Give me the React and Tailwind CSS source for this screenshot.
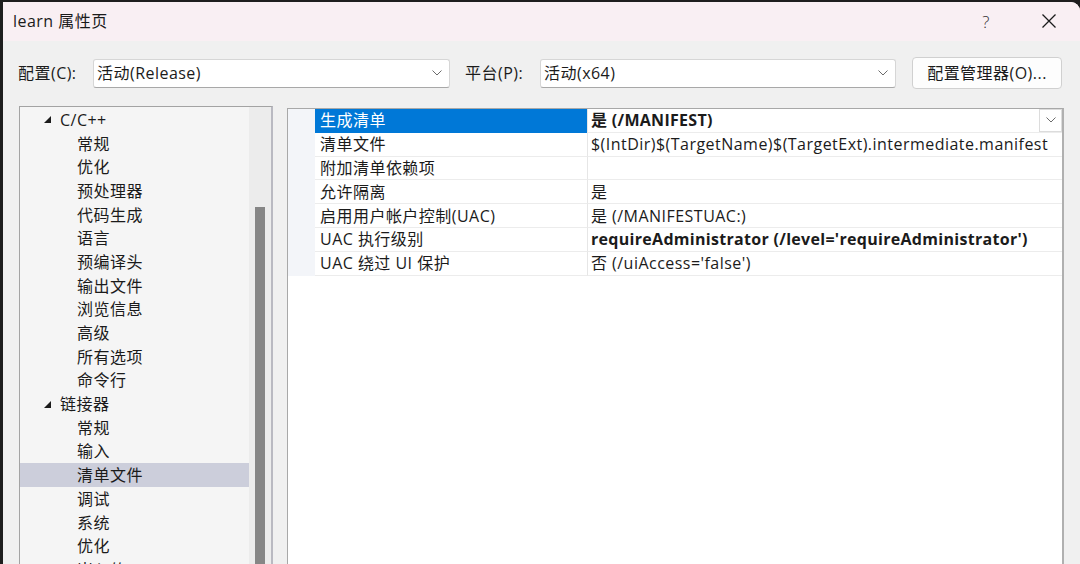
import React from "react";

const tree = [
  { t: "C/C++", top: true },
  { t: "常规" }, { t: "优化" }, { t: "预处理器" }, { t: "代码生成" }, { t: "语言" },
  { t: "预编译头" }, { t: "输出文件" }, { t: "浏览信息" }, { t: "高级" }, { t: "所有选项" }, { t: "命令行" },
  { t: "链接器", top: true },
  { t: "常规" }, { t: "输入" }, { t: "清单文件", sel: true }, { t: "调试" }, { t: "系统" }, { t: "优化" },
  { t: "嵌入的 IDL" }, { t: "Windows 元数据" },
];

const props = [
  { n: "生成清单", v: "是 (/MANIFEST)", b: true, sel: true },
  { n: "清单文件", v: "$(IntDir)$(TargetName)$(TargetExt).intermediate.manifest" },
  { n: "附加清单依赖项", v: "" },
  { n: "允许隔离", v: "是" },
  { n: "启用用户帐户控制(UAC)", v: "是 (/MANIFESTUAC:)" },
  { n: "UAC 执行级别", v: "requireAdministrator (/level='requireAdministrator')", b: true },
  { n: "UAC 绕过 UI 保护", v: "否 (/uiAccess='false')" },
];

function Chevron({ className = "" }) {
  return (
    <svg width="10" height="6" viewBox="0 0 10 6" className={className}>
      <path d="M0.5 0.5 L5 5 L9.5 0.5" fill="none" stroke="#6b6b6b" strokeWidth="1" />
    </svg>
  );
}

function Select({ text, w }) {
  return (
    <div className={`${w} h-[29px] bg-white border border-[#d6d6d6] border-b-[#a8a8a8] rounded-[3px] flex items-center pl-[3px] pr-[7px]`}>
      <span className="flex-1">{text}</span>
      <Chevron />
    </div>
  );
}

export default function App() {
  return (
    <div className="w-[1080px] h-[564px] bg-[#1e1e1e] pl-[3px] pt-[2px] overflow-hidden font-[family-name:'Open_Sans','Noto_Sans_CJK_SC',sans-serif] text-[16px] tracking-[0.47px] text-[#1b1b1b]">
      <div className="h-full bg-[#f0f0f0] rounded-tr-[9px] flex flex-col overflow-hidden">
        {/* title bar */}
        <div className="h-[39px] shrink-0 bg-[#f9eff3] flex items-center pl-[10px] pb-[1px]">
          <span className="flex-1 leading-none">learn 属性页</span>
          <span className="text-[17px] text-[#333] leading-none mr-[52px] font-light">?</span>
          <svg width="14" height="14" viewBox="0 0 14 14" className="mr-[24px]">
            <path d="M0.5 0.5 L13.5 13.5 M13.5 0.5 L0.5 13.5" stroke="#1b1b1b" strokeWidth="1.3" />
          </svg>
        </div>

        {/* config row */}
        <div className="h-[32px] mt-[16px] shrink-0 flex items-center pl-[15px]">
          <span className="w-[75px]">配置(C):</span>
          <Select text="活动(Release)" w="w-[357px]" />
          <span className="ml-[15px] w-[75px]">平台(P):</span>
          <Select text="活动(x64)" w="w-[356px]" />
          <button className="ml-[16px] w-[150px] h-[32px] bg-[#fdfdfd] border border-[#d0d0d0] rounded-[4px] flex items-center justify-center">
            配置管理器(O)...
          </button>
        </div>

        {/* panels */}
        <div className="flex-1 min-h-0 mt-[17px] flex items-start pl-[16px]">
          {/* tree */}
          <div className="w-[254px] h-[500px] border-l border-t border-[#a3a3a3] border-r-2 border-r-[#b9b9c1] bg-[#f5f5f5] flex">
            <div className="w-[229px] pt-[1px]">
              {tree.map((r, i) => (
                <div
                  key={i}
                  className={`h-[23.7px] flex items-center whitespace-nowrap ${r.sel ? "bg-[#cccedb]" : ""} ${r.top ? "pl-[24px]" : "pl-[57px]"}`}
                >
                  {r.top && (
                    <svg width="7" height="7" viewBox="0 0 7 7" className="mr-[9px]">
                      <polygon points="7,0 7,7 0,7" fill="#1b1b1b" />
                    </svg>
                  )}
                  <span>{r.t}</span>
                </div>
              ))}
            </div>
            <div className="w-[22px] bg-[#ececec] pt-[100px] pl-[6px]">
              <div className="w-[10px] h-[400px] bg-[#868686]"></div>
            </div>
          </div>

          {/* property grid */}
          <div className="ml-[14px] mt-[2px] w-[777px] h-[500px] bg-white border-l border-t border-[#a8a8a8] border-r-2 border-r-[#b0b0b0]">
            {props.map((p, i) => (
              <div key={i} className="h-[23.8px] flex">
                <div className="w-[27px] bg-[#f3f5f9]"></div>
                <div
                  className={`w-[272px] pl-[5px] flex items-center whitespace-nowrap border-b border-[#ececec] ${p.sel ? "bg-[#0078d7] text-white border-b-[#0078d7]" : ""}`}
                >
                  {p.n}
                </div>
                <div className="flex-1 border-l border-[#e6e6e6] border-b border-b-[#ececec] pl-[3px] flex items-center whitespace-nowrap">
                  <span className={`flex-1 ${p.b ? "font-bold tracking-[0.3px]" : ""}`}>{p.v}</span>
                  {p.sel && (
                    <div className="w-[23px] h-[23px] border border-[#dcdcdc] bg-white flex items-center justify-center">
                      <Chevron />
                    </div>
                  )}
                </div>
              </div>
            ))}
          </div>
        </div>
      </div>
    </div>
  );
}
